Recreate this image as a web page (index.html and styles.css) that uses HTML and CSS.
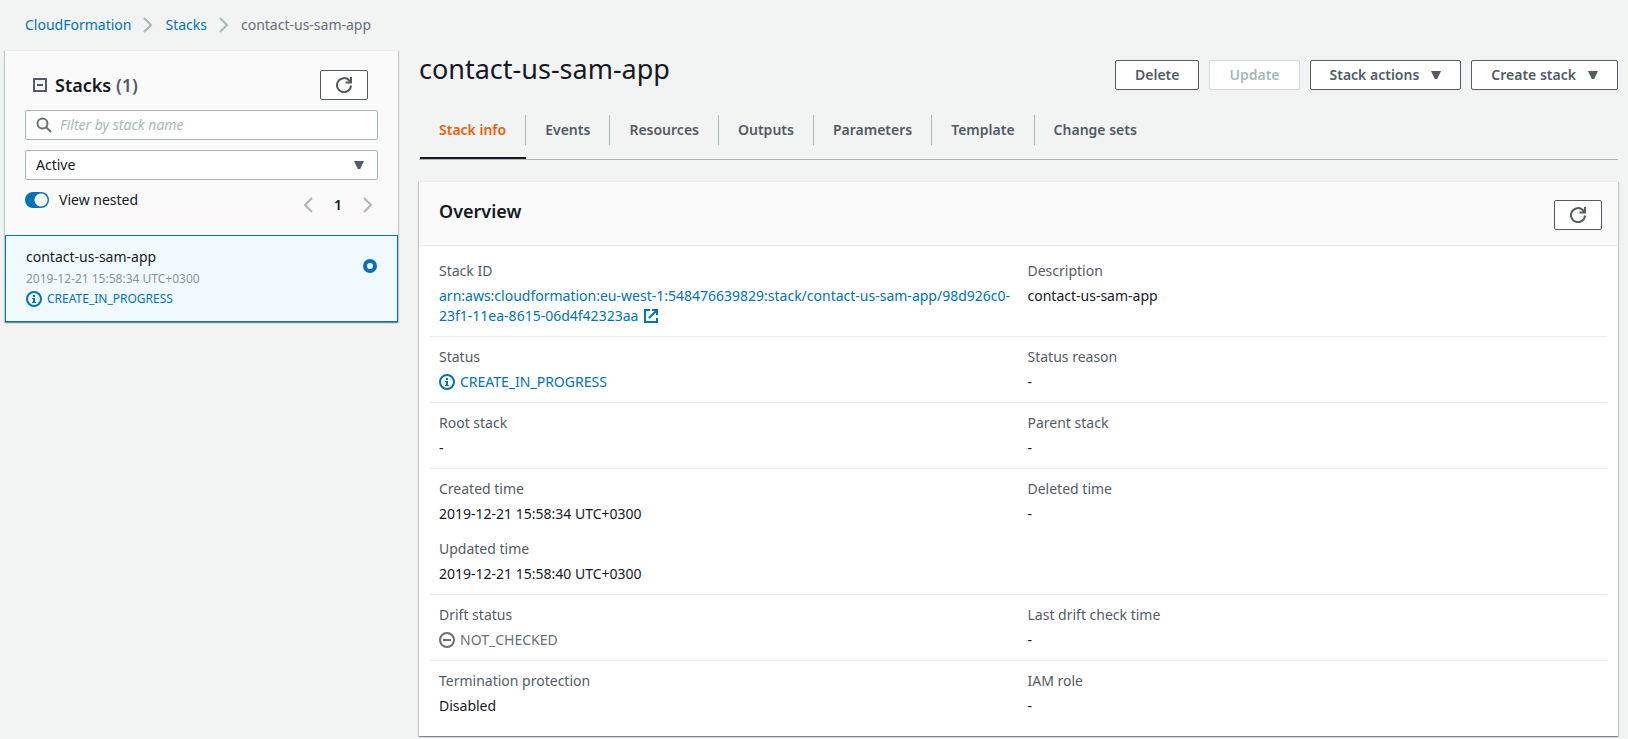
FILE: index.html
```html
<!DOCTYPE html>
<html lang="en">
<head>
<meta charset="utf-8">
<title>CloudFormation - contact-us-sam-app</title>
<link rel="stylesheet" href="styles.css">
</head>
<body>
<svg class="symbols" aria-hidden="true">
  <symbol id="chevron" viewBox="0 0 16 16"><path d="M4 1l7 7-7 7" fill="none" stroke="currentColor" stroke-width="2"/></symbol>
  <symbol id="chevron-left" viewBox="0 0 16 16"><path d="M12 1L5 8l7 7" fill="none" stroke="currentColor" stroke-width="2"/></symbol>
  <symbol id="refresh" viewBox="0 0 16 16"><path d="M15 8.500A7 7 0 1 1 13 3.200L14.500 5M15 0v5.500H9.500" fill="none" stroke="currentColor" stroke-width="2"/></symbol>
  <symbol id="info" viewBox="0 0 16 16"><circle cx="8" cy="8" r="7" fill="none" stroke="currentColor" stroke-width="2"/><path d="M7 4h2v2H7zM6 7h3v4h1v1H6v-1h1V8H6z" fill="currentColor"/></symbol>
  <symbol id="caret" viewBox="0 0 10 8"><path d="M0 0h10L6.200 8H3.800z" fill="currentColor"/></symbol>
</svg>

<nav class="breadcrumbs" aria-label="Breadcrumbs">
  <a href="#cloudformation">CloudFormation</a>
  <svg class="icon crumb-sep"><use href="#chevron"/></svg>
  <a href="#stacks">Stacks</a>
  <svg class="icon crumb-sep"><use href="#chevron"/></svg>
  <span>contact-us-sam-app</span>
</nav>

<div class="layout">
  <aside class="card sidebar">
    <div class="sidebar-header">
      <div class="sidebar-title">
        <button class="collapse" type="button" aria-label="Collapse stacks">
          <svg class="collapse-icon" viewBox="0 0 14 14"><path d="M1 1h12v12H1zM4 7h6" fill="none" stroke="currentColor" stroke-width="2"/></svg>
        </button>
        <h2>Stacks <span class="count">(1)</span></h2>
        <button class="btn btn-icon" type="button" aria-label="Refresh stacks"><svg class="icon"><use href="#refresh"/></svg></button>
      </div>
      <div class="field search">
        <svg class="icon" viewBox="0 0 16 16"><circle cx="6.500" cy="6.500" r="5" fill="none" stroke="currentColor" stroke-width="2"/><path d="M10 10l5 5" stroke="currentColor" stroke-width="2"/></svg>
        <input type="text" placeholder="Filter by stack name" aria-label="Filter by stack name">
      </div>
      <div class="field dropdown">
        <select aria-label="Stack status"><option>Active</option></select>
        <svg class="caret"><use href="#caret"/></svg>
      </div>
      <div class="list-controls">
        <label class="toggle"><input type="checkbox" checked> View nested</label>
        <div class="pagination">
          <button type="button" aria-label="Previous page"><svg class="icon"><use href="#chevron-left"/></svg></button>
          <span class="page">1</span>
          <button type="button" aria-label="Next page"><svg class="icon"><use href="#chevron"/></svg></button>
        </div>
      </div>
    </div>
    <label class="stack-item">
      <span class="stack-text">
        <span class="stack-name">contact-us-sam-app</span>
        <span class="stack-date">2019-12-21 15:58:34 UTC+0300</span>
        <span class="status small"><svg class="icon"><use href="#info"/></svg>CREATE_IN_PROGRESS</span>
      </span>
      <input type="radio" name="stack" checked>
    </label>
  </aside>

  <main class="main">
    <header class="page-header">
      <h1>contact-us-sam-app</h1>
      <div class="actions">
        <button class="btn" type="button">Delete</button>
        <button class="btn" type="button" disabled>Update</button>
        <button class="btn" type="button">Stack actions <svg class="caret"><use href="#caret"/></svg></button>
        <button class="btn" type="button">Create stack <svg class="caret"><use href="#caret"/></svg></button>
      </div>
    </header>

    <nav class="tabs" aria-label="Stack details">
      <a class="active" href="#info-tab"><span>Stack info</span></a>
      <a href="#events"><span>Events</span></a>
      <a href="#resources"><span>Resources</span></a>
      <a href="#outputs"><span>Outputs</span></a>
      <a href="#parameters"><span>Parameters</span></a>
      <a href="#template"><span>Template</span></a>
      <a href="#changesets"><span>Change sets</span></a>
    </nav>

    <section class="card">
      <div class="card-header">
        <h2>Overview</h2>
        <button class="btn btn-icon" type="button" aria-label="Refresh overview"><svg class="icon"><use href="#refresh"/></svg></button>
      </div>
      <div class="rows">
        <div class="row">
          <dl class="wide"><dt>Stack ID</dt><dd><a href="#stack-id">arn:aws:cloudformation:eu-west-1:548476639829:stack/contact-us-sam-app/98d926c0-<wbr>23f1-11ea-8615-06d4f42323aa <svg class="external" viewBox="0 0 14 14"><path d="M6 1H1v12h12V9M8 1h5v5M13 1L5 9" fill="none" stroke="currentColor" stroke-width="2"/></svg></a></dd></dl>
          <dl><dt>Description</dt><dd>contact-us-sam-app</dd></dl>
        </div>
        <div class="row">
          <dl><dt>Status</dt><dd class="status"><svg class="icon"><use href="#info"/></svg>CREATE_IN_PROGRESS</dd></dl>
          <dl><dt>Status reason</dt><dd>-</dd></dl>
        </div>
        <div class="row">
          <dl><dt>Root stack</dt><dd>-</dd></dl>
          <dl><dt>Parent stack</dt><dd>-</dd></dl>
        </div>
        <div class="row">
          <dl><dt>Created time</dt><dd>2019-12-21 15:58:34 UTC+0300</dd><dt>Updated time</dt><dd>2019-12-21 15:58:40 UTC+0300</dd></dl>
          <dl><dt>Deleted time</dt><dd>-</dd></dl>
        </div>
        <div class="row">
          <dl><dt>Drift status</dt><dd class="status muted"><svg class="icon" viewBox="0 0 16 16"><circle cx="8" cy="8" r="7" fill="none" stroke="currentColor" stroke-width="2"/><path d="M4 8h8" stroke="currentColor" stroke-width="2"/></svg>NOT_CHECKED</dd></dl>
          <dl><dt>Last drift check time</dt><dd>-</dd></dl>
        </div>
        <div class="row">
          <dl><dt>Termination protection</dt><dd>Disabled</dd></dl>
          <dl><dt>IAM role</dt><dd>-</dd></dl>
        </div>
      </div>
    </section>
  </main>
</div>
</body>
</html>
```

FILE: styles.css
```css
* { box-sizing: border-box; }

body {
  margin: 0;
  background: #f2f3f3;
  color: #16191f;
  font: 14px/20px "Noto Sans", "Open Sans", sans-serif;
}

h1, h2, dl, dd { margin: 0; }
a { color: #0073bb; text-decoration: none; }
button, input, select { font: inherit; color: inherit; }
button { cursor: pointer; }

.symbols { display: none; }
.icon { width: 16px; height: 16px; flex: none; }
.caret { width: 10px; height: 8px; flex: none; color: #545b64; }

.breadcrumbs {
  display: flex;
  align-items: center;
  gap: 9px;
  padding: 15px 25px 15px;
  color: #687078;
}
.crumb-sep { color: #aab7b8; }

.layout {
  display: flex;
  align-items: flex-start;
  gap: 21px;
  padding: 0 10px 0 5px;
}

.card {
  background: #fff;
  border-top: 1px solid #eaeded;
  box-shadow: 0 1px 1px 0 rgba(0, 28, 36, .3), 1px 1px 1px 0 rgba(0, 28, 36, .15), -1px 1px 1px 0 rgba(0, 28, 36, .15);
}

.btn {
  display: flex;
  align-items: center;
  gap: 12px;
  height: 30px;
  padding: 0 19px;
  border: 1px solid #545b64;
  border-radius: 2px;
  background: #fff;
  color: #545b64;
  font-weight: 600;
}
.btn:disabled { border-color: #d5dbdb; color: #aab7b8; }
.btn-icon { padding: 0 15px; }

.sidebar { flex: 0 0 393px; }
.sidebar-header {
  display: flex;
  flex-direction: column;
  gap: 10px;
  padding: 19px 20px 11px;
  background: #fafafa;
}
.sidebar-title { display: flex; align-items: center; }
.sidebar-title .btn { margin: 0 10px 0 auto; }
.collapse {
  display: flex;
  margin: 0 8px;
  padding: 0;
  border: 0;
  background: none;
  color: #545b64;
}
.collapse-icon { width: 14px; height: 14px; }
h2 { font-size: 18px; line-height: 22px; font-weight: 600; }
.count { color: #545b64; }

.field {
  display: flex;
  align-items: center;
  height: 30px;
  padding: 0 10px;
  border: 1px solid #aab7b8;
  border-radius: 2px;
  background: #fff;
}
.field .icon { color: #687078; }
.field input, .field select {
  flex: 1;
  min-width: 0;
  padding: 0;
  border: 0;
  outline: 0;
  background: none;
  appearance: none;
}
.search { gap: 8px; }
.search input::placeholder { color: #aab7b8; font-style: italic; opacity: 1; }
.dropdown { padding-right: 13px; }

.list-controls { display: flex; justify-content: space-between; height: 34px; }
.toggle { display: flex; align-items: center; gap: 10px; height: 20px; }
.toggle input {
  width: 24px;
  height: 16px;
  margin: 0;
  border-radius: 8px;
  appearance: none;
  background: radial-gradient(circle at 16px 8px, #fff 6px, #0073bb 7px);
}
.pagination { display: flex; align-items: center; gap: 16px; height: 30px; }
.pagination button {
  display: flex;
  padding: 0 2px;
  border: 0;
  background: none;
  color: #aab7b8;
}
.page { font-weight: 600; }

.stack-item {
  display: flex;
  justify-content: space-between;
  padding: 10px 20px 13px;
  border: 1px solid #0073bb;
  background: #f1faff;
}
.stack-text { display: flex; flex-direction: column; }
.stack-name { line-height: 22px; }
.stack-date { font-size: 12px; line-height: 22px; color: #879596; }
.stack-item input {
  width: 14px;
  height: 14px;
  margin: 13px 0;
  border: 4px solid #0073bb;
  border-radius: 50%;
  background: #fff;
  appearance: none;
}
.status { display: flex; align-items: center; gap: 5px; color: #0073bb; }
.status.small { font-size: 12px; line-height: 18px; }
.status.muted { color: #687078; }

.main { flex: 1; min-width: 0; padding-bottom: 2px; }
.page-header { display: flex; justify-content: space-between; }
h1 { font-size: 27px; line-height: 38px; font-weight: 400; }
.actions { display: flex; gap: 10px; padding-top: 10px; }

.tabs {
  display: flex;
  height: 61px;
  margin: 9px 0 21px;
  padding: 16px 0 0 1px;
  border-bottom: 1px solid #aab7b8;
}
.tabs a { color: #545b64; font-weight: 600; }
.tabs span {
  display: block;
  padding: 5px 19px;
  border-right: 1px solid #aab7b8;
}
.tabs a:last-child span { border: 0; }
.tabs .active { border-bottom: 2px solid #16191f; color: #eb5f07; }

.card-header {
  display: flex;
  justify-content: space-between;
  height: 64px;
  padding: 18px 16px 0 20px;
  border-bottom: 1px solid #eaeded;
  background: #fafafa;
}
.rows { padding: 5px 11px 10px; }
.row {
  display: grid;
  grid-template-columns: 1fr 1fr;
  padding: 10px 0;
  border-bottom: 1px solid #eaeded;
}
.row:last-child { border: 0; }
.row dl { padding: 0 9px; }
.row .wide { padding-right: 0; }
dt { margin-bottom: 5px; color: #545b64; }
dd + dt { margin-top: 15px; }
.external { width: 14px; height: 14px; margin-left: 2px; vertical-align: -2px; }
```
